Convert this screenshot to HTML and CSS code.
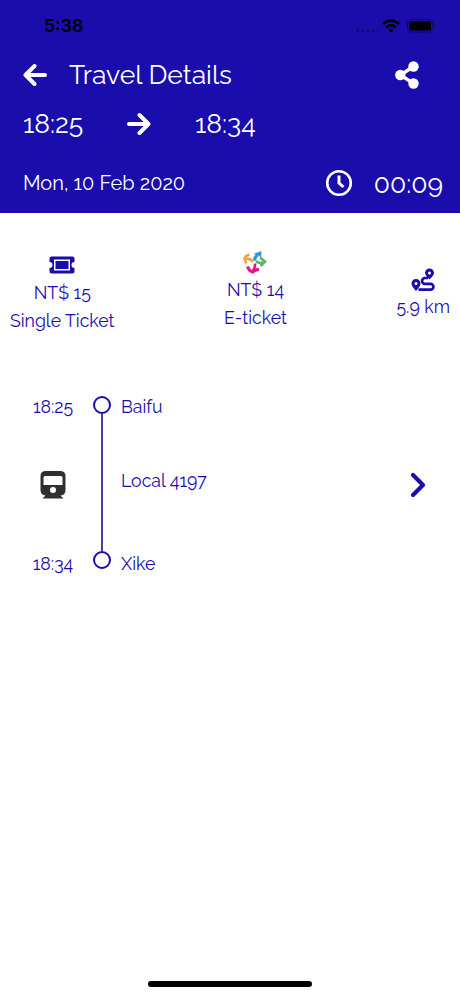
FILE: index.html
```html
<!DOCTYPE html>
<html lang="en">
<head>
<meta charset="utf-8">
<title>Travel Details</title>
<link rel="stylesheet" href="styles.css">
</head>
<body>
<header class="header">
  <div class="status">
    <span class="clock">5:38</span>
    <span class="dots"><i></i><i></i><i></i><i></i></span>
    <svg class="wifi" width="18" height="14" viewBox="0 0 18 14"><g fill="none" stroke="#000" stroke-width="2.6"><path d="M1 5Q9-2 17 5"/><path d="M4 8.4Q9 4 14 8.4"/></g><path d="M9 13.5l-2.8-3Q9 8.500 11.800 10.500z"/></svg>
    <svg class="battery" width="29" height="14" viewBox="0 0 29 14"><rect x=".5" y=".5" width="25" height="12.500" rx="3.500" fill="none" stroke="#000" stroke-opacity=".4"/><rect x="2" y="2" width="22" height="9.500" rx="2"/><path d="M27 4.500q2.500 2.200 0 4.500z" fill-opacity=".4"/></svg>
  </div>
  <div class="bar">
    <svg class="back" width="24" height="24" viewBox="0 0 24 24"><path d="M22 12H3M11.500 3L2.500 12l9 9" fill="none" stroke="#fff" stroke-width="4" stroke-linecap="round" stroke-linejoin="round"/></svg>
    <h1 class="title">Travel Details</h1>
    <svg class="share" width="24" height="28" viewBox="0 0 24 28"><path d="M18.500 5.500L5.500 14l13 8.500" fill="none" stroke="#fff" stroke-width="3.400"/><g fill="#fff"><circle cx="18.500" cy="5.500" r="5.200"/><circle cx="5.300" cy="14" r="5.200"/><circle cx="18.500" cy="22.500" r="5.200"/></g></svg>
  </div>
  <div class="times">
    <span class="time time-from">18:25</span>
    <svg class="to" width="24" height="24" viewBox="0 0 24 24"><path d="M2 12h19M12.500 3l9 9-9 9" fill="none" stroke="#fff" stroke-width="4" stroke-linecap="round" stroke-linejoin="round"/></svg>
    <span class="time">18:34</span>
  </div>
  <div class="meta">
    <span class="date">Mon, 10 Feb 2020</span>
    <svg class="timer" width="28" height="28" viewBox="0 0 28 28"><circle cx="14" cy="14" r="11.800" fill="none" stroke="#fff" stroke-width="2.600"/><path d="M14 6.500v7.500l4.500 4" fill="none" stroke="#fff" stroke-width="3"/></svg>
    <span class="duration">00:09</span>
  </div>
</header>
<main>
  <section class="fares">
    <div class="fare fare-single">
      <svg width="26" height="18" viewBox="0 0 26 18"><path fill="#1a0dab" fill-rule="evenodd" d="M2.500.500h21q2 0 2 2v3.500a3 3 0 0 0 0 6v3.500q0 2-2 2h-21q-2 0-2-2V12a3 3 0 0 0 0-6V2.500q0-2 2-2zM5 3.500v11h16v-11zM6.500 5h13v8h-13z"/></svg>
      <span class="price">NT$ 15</span><span class="kind">Single Ticket</span>
    </div>
    <div class="fare fare-e">
      <svg width="24" height="24" viewBox="0 0 24 24" fill="none" stroke-width="2.600"><path d="M11.500 10.500q.5-4 3.500-6" stroke="#209bd8" stroke-width="3.200"/><path d="M10 4l8.500-3-.5 7-2.500-3z" fill="#209bd8"/><path d="M13 11q3 3 8 1.500M17 7.500l5 4-4.500 4.500" stroke="#58b464"/><path d="M12 13.500q.5 4-2 7" stroke="#e51582"/><path d="M4.500 16.500q2 5 5 5.500 3-2.500 6.500-2.500" stroke="#e51582" stroke-width="3.200"/><path d="M10 12Q7 7.500 2 9.500M6.500 4.500Q1.500 6 1.500 9l2 4.500" stroke="#f3a53b"/></svg>
      <span class="price">NT$ 14</span><span class="kind">E-ticket</span>
    </div>
    <div class="fare fare-distance">
      <svg width="24" height="24" viewBox="0 0 24 24"><path d="M17 10h-3a2.900 2.900 0 0 0 0 5.800h5.500a2.900 2.900 0 0 1 0 5.800H7.500" fill="none" stroke="#1a0dab" stroke-width="2.700"/><path fill="#1a0dab" fill-rule="evenodd" d="M18.500 11.500Q14 7 14 5a4.500 4.500 0 0 1 9 0q0 2-4.500 6.500zM18.500 3.500a1.500 1.500 0 1 0 0 3 1.500 1.500 0 0 0 0-3zM5 23Q.5 18 .5 15.500a4.500 4.500 0 0 1 9 0Q9.500 18 5 23zM5 14a1.500 1.500 0 1 0 0 3 1.500 1.500 0 0 0 0-3z"/></svg>
      <span class="price">5.9 km</span>
    </div>
  </section>
  <section class="trip">
    <div class="when"><span>18:25</span>
      <svg width="26" height="28" viewBox="0 0 26 28"><path fill="#303032" fill-rule="evenodd" d="M6 0h14q5.500 0 5.500 5v14q0 5-5 5.500l3 3h-21l3-3q-5-.500-5-5.500V5q0-5 5.500-5zM5 5q-1.500 0-1.500 1.500V14h19V6.500Q22.500 5 21 5zM13 16a3 3 0 1 0 0 6 3 3 0 0 0 0-6z"/></svg>
      <span>18:34</span></div>
    <div class="track"><i class="stop"></i><i class="line"></i><i class="stop"></i></div>
    <div class="where"><span>Baifu</span><span class="train">Local 4197</span><span>Xike</span></div>
    <svg class="more" width="16" height="26" viewBox="0 0 16 26"><path d="M3 3l10 10L3 23" fill="none" stroke="#1a0dab" stroke-width="4.200" stroke-linecap="round" stroke-linejoin="round"/></svg>
  </section>
</main>
<div class="home"></div>
</body>
</html>
```
FILE: styles.css
```css
*{box-sizing:border-box}
body{margin:0;width:460px;height:996px;overflow:hidden;display:flex;flex-direction:column;background:#fff;color:#1a0dab;font-family:Raleway,Lato,sans-serif;font-size:17.700px}
svg{display:block;flex:none}
span,h1{white-space:nowrap}
.header{height:213px;background:#1a0dab;color:#fff;flex:none}
.status{height:51px;display:flex;align-items:center;padding:0 24px 0 44px;color:#000}
.clock{font:600 17.700px/20px Inter,sans-serif;margin-right:auto}
.dots{display:flex;gap:2.500px;margin:9px 7px 0 0}
.dots i{width:3px;height:3px;border-radius:50%;background:#000;opacity:.3}
.wifi{margin-right:7px}
.bar{height:48px;display:flex;align-items:center;padding:0 41px 0 23px}
.title{margin:0 auto 2px 22px;font-size:26.500px;font-weight:400}
.times{height:50px;display:flex;align-items:center;padding-left:23px;font-size:26.500px}
.time{margin-bottom:2px}
.time-from{width:104px}
.to{margin-right:44px}
.meta{height:68px;display:flex;align-items:center;padding:0 17px 0 23px}
.date{font-size:20px;margin-right:auto}
.timer{margin-right:21px}
.duration{font-size:26.500px}
main{flex:1}
.fares{height:183px;display:flex;justify-content:space-between;padding:37px 10px 0}
.fare{display:flex;flex-direction:column;align-items:center;line-height:27.500px}
.fare-single svg{margin:6px 0 5px}
.fare-e svg{margin-bottom:2px}
.fare-distance{padding-top:18px}
.fare-distance svg{margin-bottom:1px}
.trip{height:200px;display:flex;padding-left:32px}
.when{width:42px;height:178px;display:flex;flex-direction:column;align-items:center;justify-content:space-between}
.track{margin-left:19px;width:18px;display:flex;flex-direction:column;align-items:center;height:173px}
.stop{width:18px;height:18px;border:2px solid #1a0dab;border-radius:50%}
.line{flex:1;width:2px;background:#4c3aa5}
.where{margin-left:10px;display:flex;flex-direction:column;justify-content:space-between;height:178px}
.train{margin-bottom:10px}
.more{margin:76px 34px 0 auto}
.home{width:164px;height:6px;border-radius:3px;background:#000;margin:0 auto 9px}
```
